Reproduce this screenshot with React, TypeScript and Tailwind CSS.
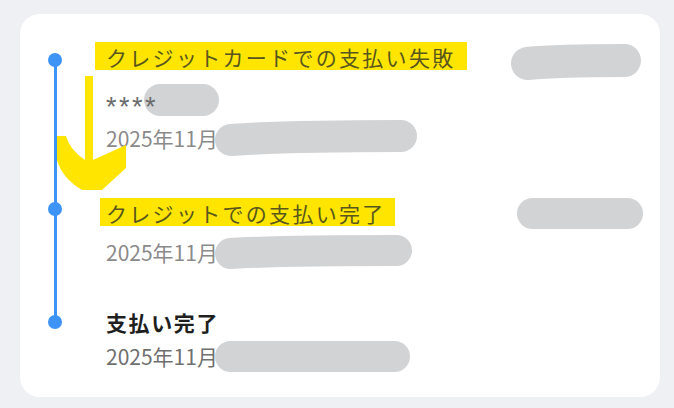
import React from 'react';

const Blob = ({ w, h, wave = 0 }: { w: number; h: number; wave?: number }) => {
  const r = h / 2;
  const a = Math.abs(wave);
  return (
    <svg width={w} height={h + a} className="block shrink-0" aria-hidden>
      <path
        d={`M ${r} ${r + a} Q ${w * 0.35} ${r + a - wave} ${w - r} ${r}`}
        stroke="#d2d3d5"
        strokeWidth={h}
        strokeLinecap="round"
        fill="none"
      />
    </svg>
  );
};

function Dot({ className }: { className: string }) {
  return <div className={`h-[14px] w-[14px] rounded-full bg-[#3d94f6] ${className}`} />;
}

export default function App() {
  return (
    <div className="min-h-screen bg-[#eff0f4] pl-5 pr-[14px] pt-[14px] pb-[11px] font-['Noto_Sans_CJK_JP','Noto_Sans',sans-serif]">
      <div className="relative h-[383px] rounded-[20px] bg-white pt-[28px]">
        {/* timeline line */}
        <div className="absolute left-[34px] top-[46px] h-[262px] w-[3px] bg-[#3d94f6]" />

        {/* item 1 */}
        <div className="flex">
          <div className="w-[86px] shrink-0 pl-[28px]">
            <Dot className="mt-[11px]" />
          </div>
          <div className="flex-1 pr-[19px]">
            <div className="flex h-[28px] items-start justify-between">
              <span className="-ml-[11px] h-[28px] bg-[#ffe500] pl-[11px] pr-[11px] text-[21px] leading-[30px] tracking-[2.3px] text-[#58561c]">
                クレジットカードでの支払い失敗
              </span>
              <div className="mt-[2px]">
                <Blob w={130} h={33} wave={3} />
              </div>
            </div>
            <div className="mt-[18px] flex h-[24px] items-center">
              <span className="translate-y-[7px] font-['Liberation_Sans',sans-serif] text-[27px] leading-[24px] tracking-[2.5px] text-[#6b6b6b]">
                ****
              </span>
              <div className="-ml-[14px]">
                <Blob w={75} h={32} />
              </div>
            </div>
            <div className="mt-[14px] flex h-[24px] items-center">
              <span className="text-[21px] leading-[24px] text-[#8a8a8a]">2025年11月</span>
              <div className="-ml-[3px]">
                <Blob w={202} h={32} wave={4} />
              </div>
            </div>
          </div>
        </div>

        {/* item 2 */}
        <div className="mt-[48px] flex">
          <div className="w-[86px] shrink-0 pl-[28px]">
            <Dot className="mt-[4px]" />
          </div>
          <div className="flex-1 pr-[17px]">
            <div className="flex h-[28px] items-start justify-between">
              <span className="-ml-[6px] h-[28px] bg-[#ffe500] pl-[6px] pr-[9px] text-[21px] leading-[30px] tracking-[2.3px] text-[#58561c]">
                クレジットでの支払い完了
              </span>
              <Blob w={126} h={31} />
            </div>
            <div className="mt-[14px] flex h-[24px] items-center">
              <span className="text-[21px] leading-[24px] text-[#8a8a8a]">2025年11月</span>
              <div className="-ml-[3px]">
                <Blob w={197} h={31} wave={3} />
              </div>
            </div>
          </div>
        </div>

        {/* item 3 */}
        <div className="mt-[44px] flex">
          <div className="w-[86px] shrink-0 pl-[28px]">
            <Dot className="mt-[7px]" />
          </div>
          <div className="flex-1">
            <div className="h-[28px] text-[21px] font-bold leading-[28px] tracking-[1.6px] text-[#1f1f1f]">
              支払い完了
            </div>
            <div className="mt-[8px] flex h-[24px] items-center">
              <span className="text-[21px] leading-[24px] text-[#6f6f6f]">2025年11月</span>
              <div className="-ml-[3px]">
                <Blob w={195} h={31} />
              </div>
            </div>
          </div>
        </div>

        {/* annotation arrow */}
        <svg className="absolute left-0 top-0" width="140" height="200" aria-hidden>
          <path
            d="M37 122 L46 122 Q50 136 65 146 L65 62 L73 62 L73 146 L106 131 L106 154 L82 176 L62 176 Q42 164 37 146 Z"
            fill="#ffe500"
          />
        </svg>
      </div>
    </div>
  );
}
